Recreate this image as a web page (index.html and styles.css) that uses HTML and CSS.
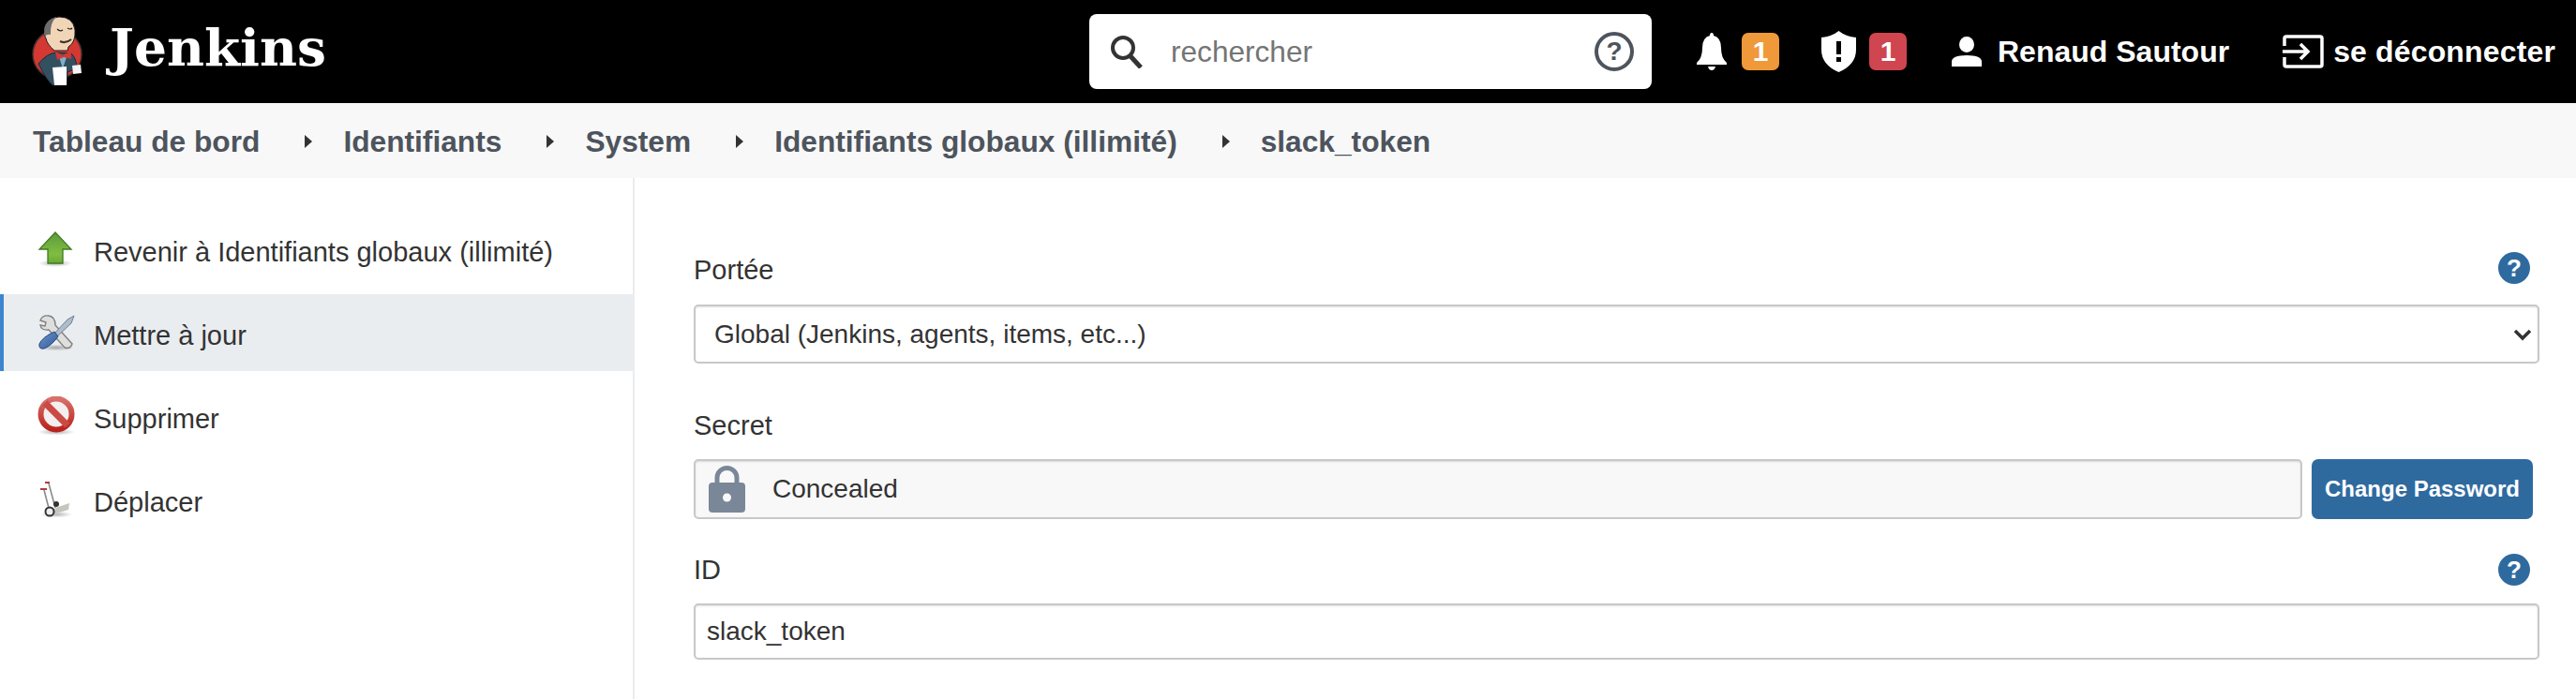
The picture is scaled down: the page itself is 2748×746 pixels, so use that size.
FILE: index.html
```html
<!DOCTYPE html>
<html lang="fr">
  <head>
    <meta charset="UTF-8" />
    <title>slack_token - Jenkins</title>
    <link rel="stylesheet" href="styles.css">
  </head>
  <body>
    <header class="topbar">
      <a class="brand">
        <svg class="brand-logo" viewBox="30 14 70 80" width="70" height="80">
          <circle cx="61" cy="57" r="26" fill="#d33833" stroke="#49312e" stroke-width="1.5"/>
          <path d="M41 67 Q50 56 60 55 L76 56 Q82 62 82 72 L72 76 L71 89 L56 90 Q48 82 41 67 Z" fill="#335061" stroke="#1c2b34"/>
          <path d="M63 60 L71 60 L67 72 Z" fill="#81b0c4"/>
          <path d="M47 36 Q47 18 63 17 Q78 17 80 31 Q81 44 73 49 L72 53 L58 53 Q50 46 49 40 Z" fill="#f0d6b7" stroke="#231f20"/>
          <path d="M48 38 Q44 22 60 17 Q53 24 54 36 Q50 35 48 38 Z" fill="#6d6b6d"/>
          <path d="M61 30 Q64 33 67 31 M72 29 Q75 31 77 29" fill="none" stroke="#231f20" stroke-width="1.2"/>
          <path d="M64 43 Q70 46 76 41" fill="none" stroke="#49312e" stroke-width="2"/>
          <path d="M59 54 L67 58 L76 53 L76 62 L68 60 L61 63 Z" fill="#d33833"/>
          <path d="M56 71 L71 70 L71 90 L58 90 Z" fill="#fff"/>
          <path d="M77 69 L86 68 L87 77 L78 78 Z" fill="#f5f5f5"/>
        </svg>
        <span class="brand-name">Jenkins</span>
      </a>
      <div class="search">
        <svg class="search-icon" viewBox="0 0 36 36" width="36" height="36">
          <circle cx="14" cy="14" r="11" fill="none" stroke="#333" stroke-width="4"/>
          <path d="M22 23 L33 35" stroke="#333" stroke-width="5"/>
        </svg>
        <div class="search-input">rechercher</div>
        <span class="search-help">?</span>
      </div>
      <div class="top-item notif">
        <svg viewBox="0 0 32 40" width="32" height="40">
          <path d="M16 0 Q18 0 18 3 Q26 5 26 16 Q26 27 32 32 V34 H0 V32 Q6 27 6 16 Q6 5 14 3 Q14 0 16 0 Z M12 36 H20 Q19 40 16 40 Q13 40 12 36 Z" fill="#fff"/>
        </svg>
        <span class="badge badge-warn">1</span>
      </div>
      <div class="top-item security">
        <svg viewBox="0 0 37 44" width="37" height="44">
          <path d="M18.5 0 Q26 6 37 7 V20 Q37 36 18.5 44 Q0 36 0 20 V7 Q11 6 18.5 0 Z" fill="#fff"/>
          <rect x="16" y="11" width="5" height="14" fill="#000"/>
          <rect x="16" y="28" width="5" height="5" fill="#000"/>
        </svg>
        <span class="badge badge-danger">1</span>
      </div>
      <div class="top-item user">
        <svg viewBox="0 0 32 32" width="32" height="32">
          <ellipse cx="16" cy="8.5" rx="8" ry="8.5" fill="#fff"/>
          <path d="M0 32 V27 Q0 20 16 20 Q32 20 32 27 V32 Z" fill="#fff"/>
        </svg>
        <span>Renaud Sautour</span>
      </div>
      <div class="top-item logout">
        <svg viewBox="0 0 44 36" width="44" height="36">
          <path d="M2 12 V4 Q2 2 4 2 H40 Q42 2 42 4 V32 Q42 34 40 34 H4 Q2 34 2 32 V24" fill="none" stroke="#fff" stroke-width="3.5"/>
          <path d="M0 18 H26 M19 10 L27 18 L19 26" fill="none" stroke="#fff" stroke-width="3.5"/>
        </svg>
        <span>se déconnecter</span>
      </div>
    </header>

    <nav class="breadcrumbs">
      <a>Tableau de bord</a>
      <i class="crumb-arrow"></i>
      <a>Identifiants</a>
      <i class="crumb-arrow"></i>
      <a>System</a>
      <i class="crumb-arrow"></i>
      <a>Identifiants globaux (illimité)</a>
      <i class="crumb-arrow"></i>
      <a>slack_token</a>
    </nav>

    <div class="page">
      <aside class="sidebar">
        <a class="task">
          <svg class="task-icon" viewBox="0 0 40 40" width="40" height="40">
            <defs>
              <linearGradient id="upFill" x1="0" y1="0" x2="0" y2="1">
                <stop offset="0" stop-color="#5e9a3c"/>
                <stop offset="0.7" stop-color="#7fbd42"/>
                <stop offset="1" stop-color="#6aa835"/>
              </linearGradient>
              <radialGradient id="shade">
                <stop offset="0" stop-color="#000" stop-opacity="0.3"/>
                <stop offset="1" stop-color="#000" stop-opacity="0"/>
              </radialGradient>
            </defs>
            <ellipse cx="19" cy="35" rx="18" ry="4" fill="url(#shade)"/>
            <path d="M19 2 L36 20 H27 V35 H11 V20 H2 Z" fill="url(#upFill)" stroke="#3f7a22" stroke-width="1.3"/>
          </svg>
          <span>Revenir à Identifiants globaux (illimité)</span>
        </a>
        <a class="task task-active">
          <svg class="task-icon" viewBox="0 0 40 40" width="40" height="40">
            <defs>
              <linearGradient id="handleFill" x1="0" y1="0" x2="1" y2="1">
                <stop offset="0" stop-color="#6f95c8"/>
                <stop offset="1" stop-color="#2f5a9c"/>
              </linearGradient>
              <linearGradient id="ringFill" x1="0" y1="0" x2="0" y2="1">
                <stop offset="0" stop-color="#d9706a"/>
                <stop offset="1" stop-color="#b9231d"/>
              </linearGradient>
            </defs>
            <ellipse cx="20" cy="36" rx="19" ry="3.5" fill="url(#shade)"/>
            <path d="M12 2 Q5 1 3 7 L9 9 L8 13 L3 12 Q4 18 12 17 L29 36 Q35 38 37 32 L19 12 Q19 3 12 2 Z" fill="#dededc" stroke="#808080" stroke-width="1.4"/>
            <path d="M39 2 L36 10 L20 25 L17 22 L32 6 Z" fill="#aebccb" stroke="#75818f" stroke-width="1"/>
            <path d="M18 19 L22 24 Q15 34 7 37 Q1 38 2 32 Q5 25 18 19 Z" fill="url(#handleFill)" stroke="#27477c" stroke-width="1"/>
          </svg>
          <span>Mettre à jour</span>
        </a>
        <a class="task">
          <svg class="task-icon" viewBox="0 0 40 42" width="40" height="42">
            <ellipse cx="20" cy="38" rx="20" ry="3.5" fill="url(#shade)"/>
            <circle cx="20" cy="19" r="16.5" fill="#f4eeee" stroke="url(#ringFill)" stroke-width="6"/>
            <path d="M8 7 L32 31" stroke="#cb4a44" stroke-width="7"/>
          </svg>
          <span>Supprimer</span>
        </a>
        <a class="task">
          <svg class="task-icon" viewBox="0 0 40 42" width="40" height="42">
            <ellipse cx="20" cy="37" rx="17" ry="3.5" fill="url(#shade)"/>
            <path d="M3 10 H10 M8 3 H13" stroke="#b33a3a" stroke-width="2"/>
            <path d="M12 4 L19 30 M7 11 L13 34" stroke="#8a8a8a" stroke-width="1.6" fill="none"/>
            <path d="M19 30 L34 25 L33 32 L16 37 Z" fill="#c4c6bf"/>
            <circle cx="20" cy="26" r="3" fill="#333"/>
            <circle cx="13" cy="34" r="4.5" fill="#eee" stroke="#333" stroke-width="2"/>
          </svg>
          <span>Déplacer</span>
        </a>
      </aside>

      <main class="content">
        <div class="field-head">
          <label>Portée</label>
          <span class="help">?</span>
        </div>
        <div class="select-wrap">
          <select class="control select">
            <option>Global (Jenkins, agents, items, etc...)</option>
          </select>
          <svg class="chevron" viewBox="0 0 20 14" width="20" height="14">
            <path d="M2 3 L10 11 L18 3" fill="none" stroke="#333" stroke-width="3.5"/>
          </svg>
        </div>

        <div class="field-head field-secret">
          <label>Secret</label>
        </div>
        <div class="secret-row">
          <div class="control concealed">
            <svg viewBox="0 0 39 50" width="39" height="50">
              <path d="M9 22 V13 a10.500 10.500 0 0 1 21 0 V22" fill="none" stroke="#7a8799" stroke-width="5"/>
              <rect y="18" width="39" height="32" rx="4" fill="#7a8799"/>
              <circle cx="19.500" cy="34" r="4.500" fill="#f8f8f8"/>
            </svg>
            <span>Concealed</span>
          </div>
          <button class="btn-change">Change Password</button>
        </div>

        <div class="field-head field-id">
          <label>ID</label>
          <span class="help">?</span>
        </div>
        <div class="control text-input">slack_token</div>
      </main>
    </div>
  </body>
</html>
```

FILE: styles.css
```css
html,
body {
  margin: 0;
  padding: 0;
  height: 100vh;
  overflow: hidden;
  background: #fff;
  color: #333;
  font-family: "Liberation Sans", Arial, sans-serif;
  font-size: 28px;
}

body {
  display: flex;
  flex-direction: column;
}

.topbar {
  display: flex;
  align-items: center;
  flex: none;
  height: 110px;
  padding: 0 22px 0 30px;
  box-sizing: border-box;
  background: #000;
  color: #fff;
  font-size: 32px;
  font-weight: bold;
}

.brand {
  display: flex;
  align-items: center;
  margin-right: auto;
}

.brand-logo {
  display: block;
}

.brand-name {
  margin-left: 17px;
  padding-bottom: 10px;
  font-family: "DejaVu Serif", serif;
  font-size: 55px;
  font-weight: bold;
  line-height: 1;
}

.search {
  display: flex;
  align-items: center;
  width: 600px;
  height: 80px;
  box-sizing: border-box;
  padding: 0 19px 0 22px;
  background: #fff;
  border-radius: 8px;
}

.search-input {
  flex: 1;
  margin-left: 29px;
  color: #757575;
  font-size: 31.6px;
  font-weight: normal;
}

.search-help {
  display: flex;
  align-items: center;
  justify-content: center;
  width: 42px;
  height: 42px;
  box-sizing: border-box;
  border: 4px solid #4d545d;
  border-radius: 50%;
  color: #4d545d;
  font-size: 28px;
}

.top-item {
  display: flex;
  align-items: center;
}

.notif {
  gap: 16px;
  margin-left: 48px;
}

.security {
  gap: 14px;
  margin-left: 45px;
}

.user {
  gap: 17px;
  margin-left: 48px;
}

.logout {
  gap: 10px;
  margin-left: 57px;
  letter-spacing: 0.15px;
}

.badge {
  display: flex;
  align-items: center;
  justify-content: center;
  width: 40px;
  height: 40px;
  border-radius: 7px;
  font-size: 30px;
}

.badge-warn {
  background: #f0993a;
}

.badge-danger {
  background: #cf4550;
}

.breadcrumbs {
  display: flex;
  align-items: center;
  flex: none;
  height: 80px;
  padding: 2px 35px 0;
  box-sizing: border-box;
  background: #f8f8f8;
  color: #4d545d;
  font-size: 31.7px;
  font-weight: bold;
}

.crumb-arrow {
  width: 0;
  height: 0;
  margin: 0 33px 0 48px;
  border-left: 8px solid #333;
  border-top: 7px solid transparent;
  border-bottom: 7px solid transparent;
}

.page {
  display: flex;
  flex: 1;
  min-height: 0;
}

.sidebar {
  display: flex;
  flex-direction: column;
  flex: none;
  gap: 7px;
  width: 675px;
  padding-top: 35px;
  border-right: 2px solid #e9ecef;
}

.task {
  display: flex;
  align-items: center;
  height: 82px;
  padding-left: 36px;
  border-left: 4px solid transparent;
  box-sizing: border-box;
  font-size: 29px;
}

.task-active {
  background: #e9edf0;
  border-left-color: #3d85d1;
}

.task-icon {
  flex: none;
}

.task span {
  margin-left: 20px;
  padding-top: 6px;
}

.content {
  flex: 1;
  padding: 79px 39px 0 63px;
  min-width: 0;
}

.field-head {
  display: flex;
  align-items: center;
  justify-content: space-between;
  height: 34px;
  padding-right: 10px;
  margin-bottom: 22px;
}

.field-head label {
  padding-top: 4px;
  font-size: 29px;
}

.field-secret {
  margin-top: 47px;
  margin-bottom: 21px;
}

.field-id {
  margin-top: 37px;
  margin-bottom: 19px;
}

.field-id label {
  padding-top: 1px;
}

.help {
  display: flex;
  align-items: center;
  justify-content: center;
  width: 34px;
  height: 34px;
  border-radius: 50%;
  background: #2f6a9f;
  color: #fff;
  font-size: 26px;
  font-weight: bold;
}

.control {
  box-sizing: border-box;
  border: 2px solid #c8c8c8;
  border-radius: 5px;
  box-shadow: inset 0 1px 2px rgba(0, 0, 0, 0.12);
  color: #333;
  font-family: inherit;
  font-size: 28px;
}

.select-wrap {
  position: relative;
}

.select {
  display: block;
  width: 100%;
  height: 63px;
  padding: 0 20px;
  background: #fff;
  appearance: none;
}

.chevron {
  position: absolute;
  top: 25px;
  right: 8px;
}

.secret-row {
  display: flex;
  gap: 10px;
  padding-right: 7px;
}

.concealed {
  display: flex;
  align-items: center;
  flex: 1;
  gap: 29px;
  height: 64px;
  padding-left: 14px;
  background: #f8f8f8;
}

.btn-change {
  flex: none;
  width: 236px;
  height: 64px;
  padding: 0;
  border: none;
  border-radius: 7px;
  background: #2f6a9f;
  color: #fff;
  font-family: inherit;
  font-size: 24px;
  font-weight: bold;
}

.text-input {
  display: flex;
  align-items: center;
  height: 60px;
  padding-left: 12px;
}
```
